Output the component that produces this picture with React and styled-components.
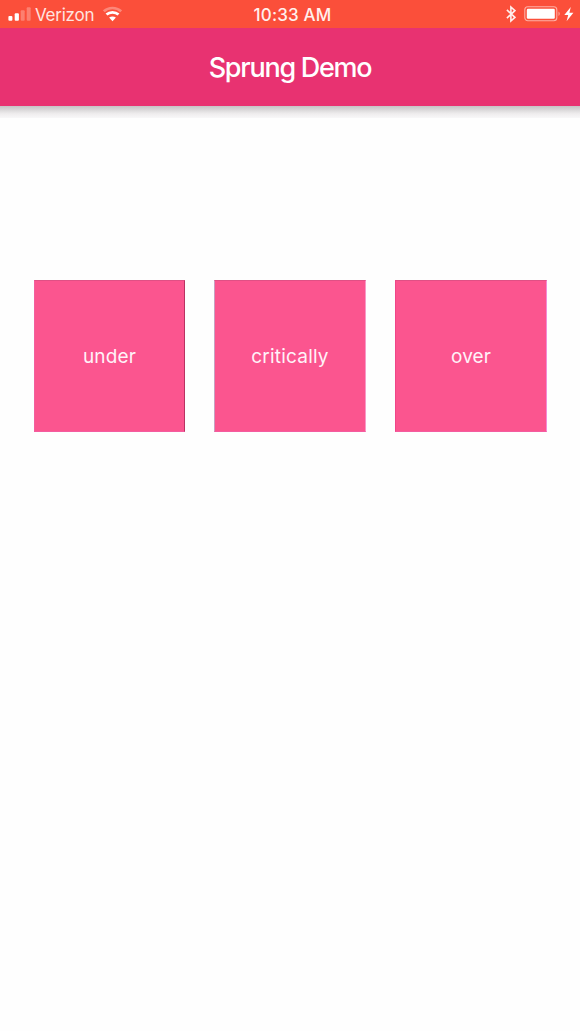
import React from "react";
import styled, { createGlobalStyle } from "styled-components";

const GlobalStyle = createGlobalStyle`
  body {
    margin: 0;
    background: #fefefe;
    font-family: Inter, "Liberation Sans", sans-serif;
  }
`;

const Screen = styled.div`
  display: flex;
  flex-direction: column;
  width: 580px;
  height: 1031px;
  overflow: hidden;
  background: #fefefe;
`;

const StatusBar = styled.div`
  display: grid;
  grid-template-columns: 1fr auto 1fr;
  align-items: center;
  height: 28px;
  flex: none;
  padding: 0 6px 0 8px;
  box-sizing: border-box;
  background: #fb4f3a;
  color: #fff;
`;

const StatusGroup = styled.div`
  display: flex;
  align-items: center;
  height: 28px;
  justify-content: ${(p) => (p.$end ? "flex-end" : "flex-start")};
`;

const Carrier = styled.span`
  margin: 1px 9px 0 4px;
  font-size: 17px;
  line-height: 20px;
  letter-spacing: -0.25px;
  color: #ffe4e0;
`;

const Clock = styled.span`
  margin-top: 1px;
  padding-left: 3px;
  font-size: 17px;
  line-height: 20px;
  font-weight: 500;
  letter-spacing: 0.15px;
  white-space: nowrap;
  color: #fff0ed;
`;

const Glyph = styled.svg`
  display: block;
  flex: none;
`;

const Header = styled.header`
  display: flex;
  align-items: center;
  justify-content: center;
  height: 78px;
  flex: none;
  padding-top: 2px;
  box-sizing: border-box;
  background: #e83271;
`;

const Title = styled.h1`
  margin: 0;
  font-size: 27px;
  line-height: 32px;
  font-weight: 500;
  letter-spacing: -1.27px;
  color: #fff;
`;

const HeaderShadow = styled.div`
  height: 12px;
  flex: none;
  background: linear-gradient(#c6c4c5, #dcdadb 35%, #efedee 65%, #f8f7f8);
`;

const TileRow = styled.main`
  display: flex;
  justify-content: space-between;
  padding: 162px 33px 0 34px;
`;

const Tile = styled.div`
  display: flex;
  align-items: center;
  justify-content: center;
  width: ${(p) => p.$width};
  height: 152px;
  padding-top: 1px;
  box-sizing: border-box;
  border: 1px solid;
  border-color: #e05085 ${(p) => p.$right} #f45ca0 ${(p) => p.$left};
  background: #fb558f;
  color: #fff2f8;
  font-size: 19px;
  line-height: 24px;
  letter-spacing: ${(p) => p.$tracking};
`;

const tiles = [
  { label: "under", width: "151px", left: "#f25f9e", right: "#b93262", tracking: "0.15px" },
  { label: "critically", width: "152px", left: "#c8a0c0", right: "#f79ac8", tracking: "0.2px" },
  { label: "over", width: "152px", left: "#f04588", right: "#f48ad8", tracking: "0.1px" },
];

function Signal() {
  return (
    <Glyph width="23" height="28" viewBox="0 0 23 28" fill="#fff">
      <rect x="0.4" y="16" width="4" height="4.8" rx="1" />
      <rect x="6.7" y="13.2" width="4.2" height="7.6" rx="1" />
      <rect x="12.7" y="10.2" width="4" height="10.6" rx="1" opacity="0.28" />
      <rect x="18.7" y="7.2" width="4" height="13.6" rx="1" opacity="0.28" />
    </Glyph>
  );
}

function Wifi() {
  return (
    <Glyph width="19" height="28" viewBox="0 0 19 28" fill="none" stroke="#fff">
      <path d="M0.8 11.4C5.6 6.9 13.4 6.9 18.2 11.4" strokeWidth="2.6" opacity="0.32" />
      <path d="M3.5 14.5C6.7 11.6 12.3 11.6 15.5 14.5" strokeWidth="2.8" />
      <path d="M6.1 17.6C8 16 11 16 12.9 17.6L9.5 21.2Z" fill="#fff" stroke="none" />
    </Glyph>
  );
}

function Bluetooth() {
  return (
    <Glyph width="10" height="28" viewBox="0 0 10 28" fill="none" stroke="#fff0ed" strokeWidth="1.6">
      <path d="M0.9 9.9L8.9 17.4L4.9 21V7L8.9 10.6L0.9 18.1" />
    </Glyph>
  );
}

function Battery() {
  return (
    <Glyph width="37" height="28" viewBox="0 0 37 28">
      <rect x="0.8" y="6.7" width="32" height="14" rx="3" fill="none" stroke="#fff" strokeWidth="1.1" opacity="0.55" />
      <rect x="2.8" y="8.7" width="28" height="10" rx="1.2" fill="#fff" />
      <path d="M34.5 11.5C36.2 12.4 36.2 15.1 34.5 16Z" fill="#fff" opacity="0.5" />
    </Glyph>
  );
}

function Bolt() {
  return (
    <Glyph width="10" height="28" viewBox="0 0 10 28" fill="#fff">
      <path d="M6.8 7L0.3 15.1H4.2L2.6 21.3L9.4 12.7H5.4Z" />
    </Glyph>
  );
}

const BatteryGroup = styled.div`
  display: flex;
  gap: 3px;
  margin-left: 8px;
`;

export default function App() {
  return (
    <Screen>
      <GlobalStyle />
      <StatusBar>
        <StatusGroup>
          <Signal />
          <Carrier>Verizon</Carrier>
          <Wifi />
        </StatusGroup>
        <Clock>10:33 AM</Clock>
        <StatusGroup $end>
          <Bluetooth />
          <BatteryGroup>
            <Battery />
            <Bolt />
          </BatteryGroup>
        </StatusGroup>
      </StatusBar>
      <Header>
        <Title>Sprung Demo</Title>
      </Header>
      <HeaderShadow />
      <TileRow>
        {tiles.map((t) => (
          <Tile key={t.label} $width={t.width} $left={t.left} $right={t.right} $tracking={t.tracking}>
            {t.label}
          </Tile>
        ))}
      </TileRow>
    </Screen>
  );
}
